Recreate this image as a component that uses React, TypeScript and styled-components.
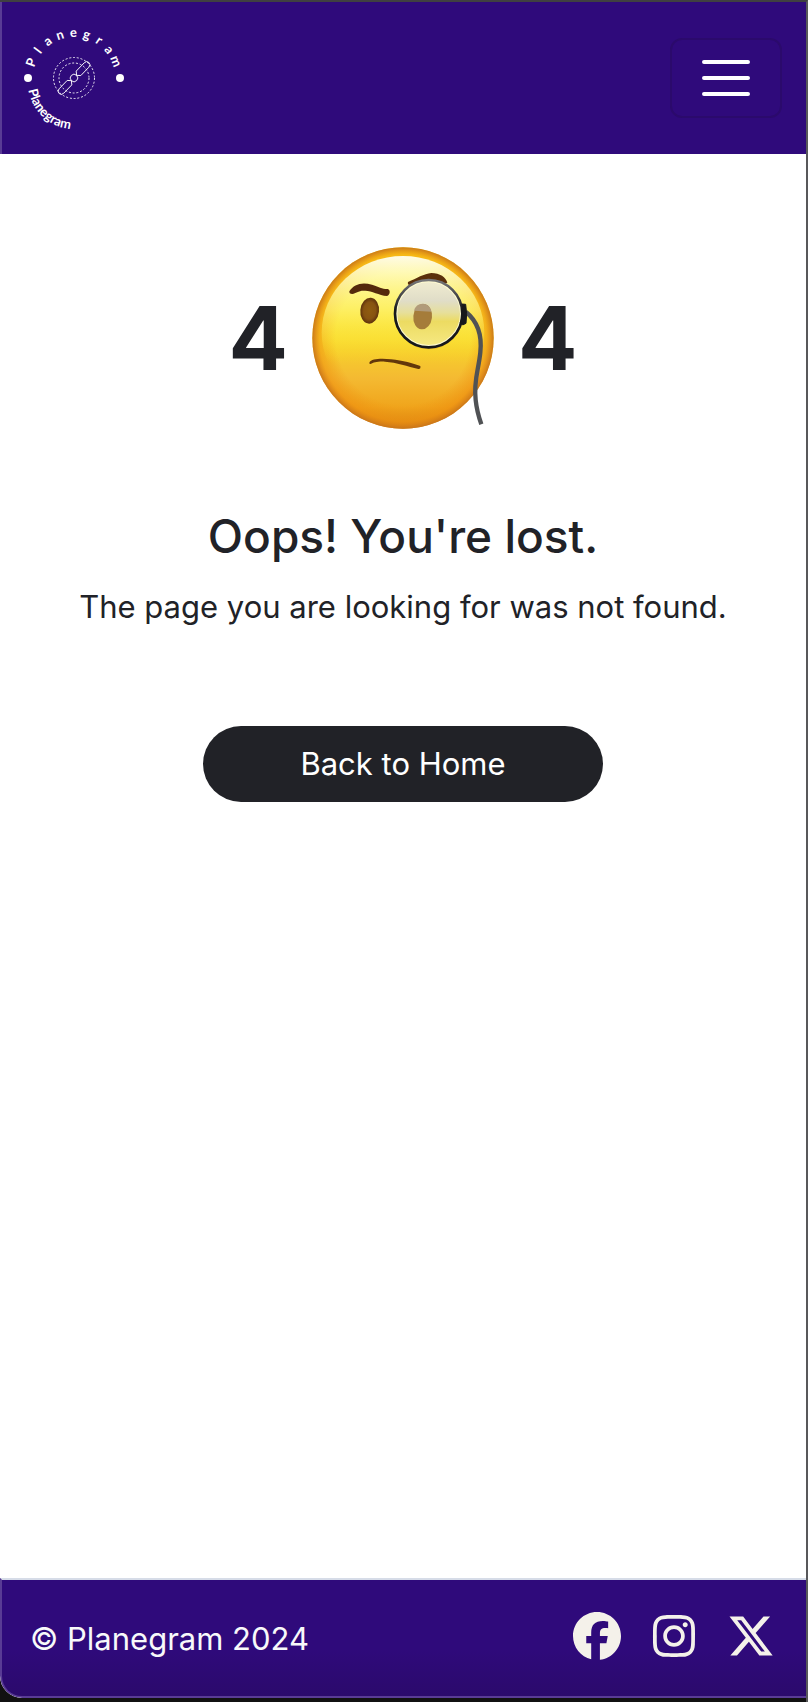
import React from "react";
import styled, { createGlobalStyle } from "styled-components";
import { FaFacebook, FaInstagram, FaXTwitter } from "react-icons/fa6";

const ink = "#212227";
const brand = "#2f0a7b";

const GlobalStyle = createGlobalStyle`
  *, *::before, *::after { box-sizing: border-box; }
  body {
    margin: 0;
    background: #111;
    color: ${ink};
    font-family: Inter, "Liberation Sans", sans-serif;
    font-size: 31px;
    line-height: 48px;
  }
`;

const Frame = styled.div`
  display: flex;
  min-height: 100vh;
  padding-bottom: 4px;
  border-top: 2px solid #404041;
  border-right: 2px solid #58585a;
`;

const Page = styled.div`
  flex: 1;
  display: flex;
  flex-direction: column;
  overflow: hidden;
  background: #fff;
  border-bottom-left-radius: 22px;
`;

const Header = styled.header`
  display: flex;
  align-items: center;
  justify-content: space-between;
  height: 152px;
  padding: 0 24px 0 16px;
  background: ${brand};
  border-left: 2px solid #593b95;
`;

const LogoLink = styled.a`
  display: flex;
  color: #fff;
`;

const LogoText = styled.text`
  font-family: Lato, sans-serif;
  font-size: 13px;
  font-weight: 700;
  fill: currentColor;
`;

const MenuButton = styled.button`
  display: flex;
  align-items: center;
  justify-content: center;
  width: 112px;
  height: 80px;
  padding: 0;
  color: #fff;
  background: transparent;
  border: 2px solid #2b0a6c;
  border-radius: 12px;
`;

const Main = styled.main`
  flex: 1;
  display: flex;
  flex-direction: column;
  align-items: center;
  padding: 93px 24px 48px;
  text-align: center;
`;

const Code = styled.div`
  display: flex;
  align-items: center;
  gap: 24px;
  font-size: 88px;
  font-weight: 700;
  line-height: 104px;
`;

const Title = styled.h1`
  margin: 77px 0 17px;
  font-size: 46px;
  font-weight: 500;
  line-height: 60px;
`;

const Message = styled.p`
  margin: 0 0 95px;
`;

const HomeButton = styled.button`
  width: 400px;
  max-width: 100%;
  height: 76px;
  padding: 0;
  color: #fff;
  background: ${ink};
  border: 0;
  border-radius: 38px;
  font: inherit;
`;

const Footer = styled.footer`
  display: flex;
  align-items: center;
  justify-content: space-between;
  height: 120px;
  padding: 2px 31px 0 28px;
  color: #f8f9fa;
  background: linear-gradient(${brand} 60%, #2b0a6c);
  border: solid #593b95;
  border-width: 2px 0 2px 2px;
  border-top-color: #d6dce8;
  border-bottom-left-radius: 22px;
`;

const Social = styled.nav`
  display: flex;
  gap: 29px;
  padding-bottom: 6px;
`;

const SocialLink = styled.a`
  display: flex;
  color: #f4f1ea;

  svg {
    width: auto;
    height: 48px;
  }
`;

const arcLetters = [..."Planegram"];

function Logo() {
  return (
    <svg width="112" height="112" viewBox="-56 -56 112 112" overflow="visible" role="img" aria-label="Planegram">
      <defs>
        <path id="lower-arc" d="M-46 5A46 46 0 0 0 46 5" />
      </defs>
      {arcLetters.map((letter, i) => (
        <LogoText key={i} y="-41" textAnchor="middle" transform={`rotate(${-70 + i * 17.3})`}>
          {letter}
        </LogoText>
      ))}
      <LogoText>
        <textPath href="#lower-arc" startOffset="7">Planegram</textPath>
      </LogoText>
      <circle cx="-46" r="4" fill="currentColor" />
      <circle cx="46" r="4" fill="currentColor" />
      <g fill="none" stroke="currentColor">
        <circle r="20.5" strokeWidth="0.9" strokeDasharray="2 1.8" />
        <circle r="15" strokeWidth="0.9" strokeDasharray="2 1.8" />
        <g transform="rotate(-46)" strokeWidth="0.9">
          <circle r="3.7" />
          <path d="M3.7 0L6.5 -3.2H18Q21.5 -3.2 21.5 0Q21.5 3.2 18 3.2H6.5Z" />
          <path d="M-3.7 0L-6.5 -3.2H-18Q-21.5 -3.2 -21.5 0Q-21.5 3.2 -18 3.2H-6.5Z" />
        </g>
      </g>
    </svg>
  );
}

function MonocleFace() {
  return (
    <svg width="182" height="182" viewBox="306 51 546 546" overflow="visible" role="img" aria-label="0">
      <defs>
        <linearGradient id="face" x1="0" y1="0" x2="0" y2="1">
          <stop offset="0" stopColor="#ffe51e" />
          <stop offset="0.5" stopColor="#f8d82a" />
          <stop offset="0.72" stopColor="#f4ba32" />
          <stop offset="0.88" stopColor="#f0a51c" />
          <stop offset="1" stopColor="#d98a16" />
        </linearGradient>
        <radialGradient id="rim" cx="0.5" cy="0.5" r="0.5">
          <stop offset="0.74" stopColor="#ee8a0c" stopOpacity="0" />
          <stop offset="0.92" stopColor="#ee8a0c" stopOpacity="0.5" />
          <stop offset="1" stopColor="#c8741a" stopOpacity="0.95" />
        </radialGradient>
        <linearGradient id="shine" x1="0" y1="0" x2="0" y2="1">
          <stop offset="0" stopColor="#fffff0" stopOpacity="0.95" />
          <stop offset="0.35" stopColor="#fffc8a" stopOpacity="0.6" />
          <stop offset="0.7" stopColor="#ffee20" stopOpacity="0" />
        </linearGradient>
        <linearGradient id="lens" x1="0" y1="0" x2="0" y2="1">
          <stop offset="0" stopColor="#f0ecd0" />
          <stop offset="0.3" stopColor="#e0ddc8" />
          <stop offset="0.48" stopColor="#e6df9c" />
          <stop offset="0.62" stopColor="#ecdb62" />
          <stop offset="1" stopColor="#f6e982" />
        </linearGradient>
        <linearGradient id="ring" x1="0" y1="0" x2="0" y2="1">
          <stop offset="0" stopColor="#77777a" />
          <stop offset="0.45" stopColor="#17181b" />
        </linearGradient>
        <radialGradient id="eye">
          <stop offset="0" stopColor="#8f5c10" />
          <stop offset="0.65" stopColor="#875311" />
          <stop offset="1" stopColor="#5d310c" />
        </radialGradient>
      </defs>
      <circle cx="579" cy="324" r="272" fill="url(#face)" />
      <circle cx="579" cy="324" r="272" fill="url(#rim)" />
      <ellipse cx="579" cy="308" rx="244" ry="230" fill="url(#shine)" />
      <path d="M418 184C432 162 456 155 486 164C506 170 519 178 533 177C542 179 541 195 531 198C506 196 484 181 464 182C445 181 438 190 427 192C420 192 417 189 418 184Z" fill="#54290c" />
      <path d="M594 156C620 145 642 131 664 129C690 129 708 142 712 158C700 168 620 158 602 167C595 167 592 160 594 156Z" fill="#5b300b" />
      <ellipse cx="479" cy="242" rx="28" ry="39" fill="url(#eye)" transform="rotate(6 479 242)" />
      <circle cx="657" cy="256" r="102" fill="#c57b10" opacity="0.35" />
      <circle cx="656" cy="251" r="97" fill="url(#lens)" stroke="#fffbd0" strokeWidth="6" />
      <ellipse cx="638" cy="260" rx="28" ry="38" fill="#a57c3a" transform="rotate(6 638 260)" />
      <path d="M612 242Q618 220 640 221Q659 222 665 245Z" fill="#b19b7a" />
      <circle cx="656" cy="251" r="101" fill="none" stroke="url(#ring)" strokeWidth="8" />
      <path d="M478 398C484 386 513 385 543 388C580 391 608 401 631 408Q633 418 625 417C593 409 560 397 525 395C500 394 491 398 482 402Q477 402 478 398Z" fill="#63370b" />
      <path d="M768 246C805 276 816 320 811 367C806 420 790 450 797 510C800 540 807 563 814 583" fill="none" stroke="#505255" strokeWidth="13" />
      <path d="M756 222L767 223L770 251L768 280L758 285L751 278L758 252Z" fill="#17181b" stroke="#17181b" strokeWidth="3" />
    </svg>
  );
}

export default function App() {
  return (
    <>
      <GlobalStyle />
      <Frame>
        <Page>
          <Header>
            <LogoLink href="#"><Logo /></LogoLink>
            <MenuButton type="button" aria-label="Toggle navigation">
              <svg width="48" height="36" viewBox="0 0 48 36" stroke="currentColor" strokeWidth="4" strokeLinecap="round">
                <path d="M2 2H46M2 18H46M2 34H46" />
              </svg>
            </MenuButton>
          </Header>
          <Main>
            <Code>
              <span>4</span>
              <MonocleFace />
              <span>4</span>
            </Code>
            <Title>Oops! You're lost.</Title>
            <Message>The page you are looking for was not found.</Message>
            <HomeButton type="button">Back to Home</HomeButton>
          </Main>
          <Footer>
            <span>© Planegram 2024</span>
            <Social aria-label="Social media">
              <SocialLink href="#" aria-label="Facebook"><FaFacebook /></SocialLink>
              <SocialLink href="#" aria-label="Instagram"><FaInstagram /></SocialLink>
              <SocialLink href="#" aria-label="X"><FaXTwitter /></SocialLink>
            </Social>
          </Footer>
        </Page>
      </Frame>
    </>
  );
}
